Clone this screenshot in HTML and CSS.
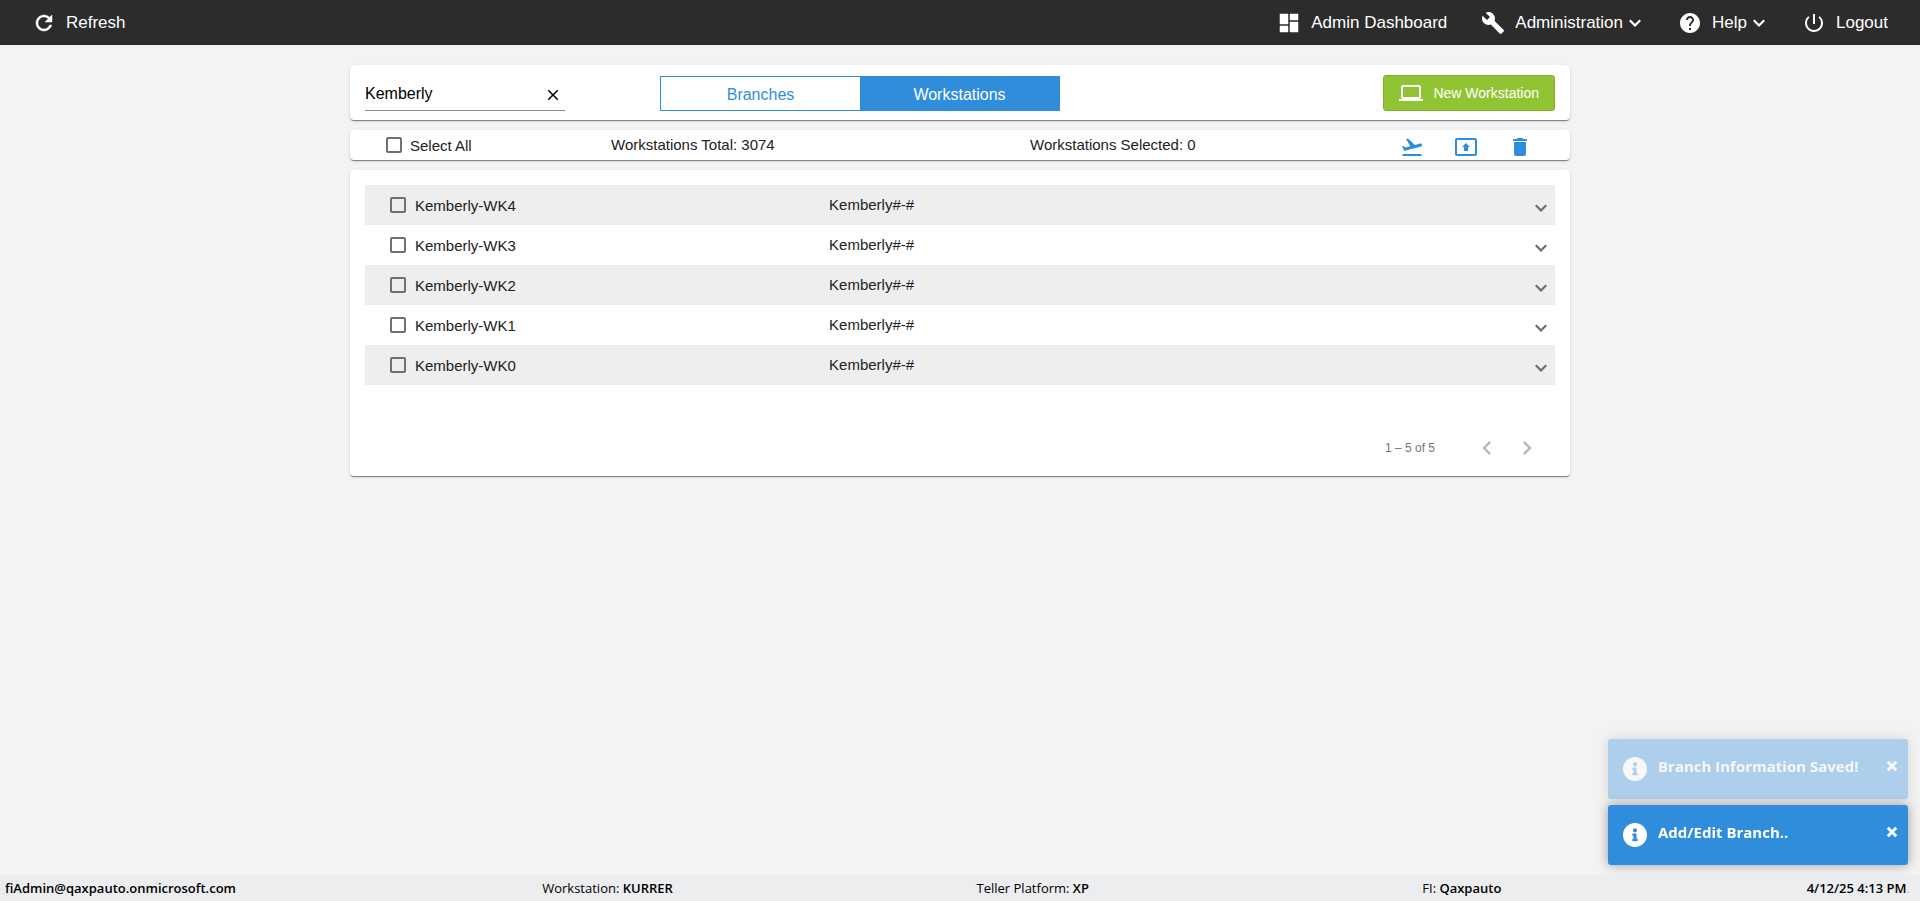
FILE: index.html
```
<!DOCTYPE html>
<html lang="en">
<head>
  <meta charset="UTF-8">
  <meta name="viewport" content="width=device-width, initial-scale=1.0">
  <title>Admin - Workstations</title>
  <link rel="stylesheet" href="styles.css">
</head>
<body>
  <!-- shared icons -->
  <svg class="sprite" aria-hidden="true">
    <symbol id="chevron" viewBox="3 3 18 18"><path d="M6.8 9.3l5.2 5.2 5.2-5.2" fill="none" stroke="currentColor" stroke-width="2.2"/></symbol>
    <symbol id="info" viewBox="8 8 496 496"><path d="M256 8C119.043 8 8 119.083 8 256c0 136.997 111.043 248 248 248s248-111.003 248-248C504 119.083 392.957 8 256 8zm0 110c23.196 0 42 18.804 42 42s-18.804 42-42 42-42-18.804-42-42 18.804-42 42-42zm56 254c0 6.627-5.373 12-12 12h-88c-6.627 0-12-5.373-12-12v-24c0-6.627 5.373-12 12-12h12v-64h-12c-6.627 0-12-5.373-12-12v-24c0-6.627 5.373-12 12-12h64c6.627 0 12 5.373 12 12v100h12c6.627 0 12 5.373 12 12v24z"/></symbol>
    <symbol id="cross" viewBox="0 0 12 12"><path d="M1.8 1.8l8.4 8.4M10.2 1.8l-8.4 8.4" fill="none" stroke="currentColor" stroke-width="3"/></symbol>
  </svg>

  <header class="topbar">
    <button class="nav-item">
      <svg class="icon" viewBox="0 0 24 24"><path d="M17.65 6.35C16.2 4.9 14.21 4 12 4c-4.42 0-7.99 3.58-7.99 8s3.57 8 7.99 8c3.73 0 6.84-2.55 7.73-6h-2.08c-.82 2.33-3.04 4-5.65 4-3.31 0-6-2.69-6-6s2.69-6 6-6c1.66 0 3.14.69 4.22 1.78L13 11h7V4l-2.35 2.35z" stroke="currentColor" stroke-width=".5"/></svg>
      <span>Refresh</span>
    </button>
    <nav class="nav-right">
      <a class="nav-item" href="#">
        <svg class="icon" viewBox="0 0 24 24"><path d="M3 13h8V3H3v10zm0 8h8v-6H3v6zm10 0h8V11h-8v10zm0-18v6h8V3h-8z" stroke="currentColor" stroke-width=".5"/></svg>
        <span>Admin Dashboard</span>
      </a>
      <button class="nav-item">
        <svg class="icon" viewBox="0 0 24 24"><path d="M22.7 19l-9.1-9.1c.9-2.3.4-5-1.5-6.9-2-2-5-2.4-7.4-1.3L9 6 6 9 1.6 4.7C.4 7.1.9 10.1 2.9 12.1c1.9 1.9 4.6 2.4 6.9 1.5l9.1 9.1c.4.4 1 .4 1.4 0l2.3-2.3c.5-.4.5-1.1.1-1.4z"/></svg>
        <span>Administration</span>
        <svg class="chevron"><use href="#chevron"/></svg>
      </button>
      <button class="nav-item">
        <svg class="icon" viewBox="0 0 24 24"><path d="M12 2C6.48 2 2 6.48 2 12s4.48 10 10 10 10-4.48 10-10S17.52 2 12 2zm1 17h-2v-2h2v2zm2.07-7.75l-.9.92C13.45 12.9 13 13.5 13 15h-2v-.5c0-1.1.45-2.1 1.17-2.83l1.24-1.26c.37-.36.59-.86.59-1.41 0-1.1-.9-2-2-2s-2 .9-2 2H8c0-2.21 1.79-4 4-4s4 1.79 4 4c0 .88-.36 1.68-.93 2.25z"/></svg>
        <span>Help</span>
        <svg class="chevron"><use href="#chevron"/></svg>
      </button>
      <a class="nav-item" href="#">
        <svg class="icon" viewBox="0 0 24 24"><path d="M13 3h-2v10h2V3zm4.83 2.17l-1.42 1.42C17.99 7.86 19 9.81 19 12c0 3.87-3.13 7-7 7s-7-3.13-7-7c0-2.19 1.01-4.14 2.58-5.42L6.17 5.17C4.23 6.82 3 9.26 3 12c0 4.97 4.03 9 9 9s9-4.03 9-9c0-2.74-1.23-5.18-3.17-6.83z"/></svg>
        <span>Logout</span>
      </a>
    </nav>
  </header>

  <main class="content">
    <section class="card toolbar">
      <div class="search">
        <input class="search-input" type="text" value="Kemberly" aria-label="Search workstations">
        <button class="search-clear" aria-label="Clear">
          <svg viewBox="0 0 24 24"><path d="M19 6.41L17.59 5 12 10.59 6.41 5 5 6.41 10.59 12 5 17.59 6.41 19 12 13.41 17.59 19 19 17.59 13.41 12z"/></svg>
        </button>
      </div>
      <div class="tabs">
        <button class="tab">Branches</button>
        <button class="tab active">Workstations</button>
      </div>
      <button class="btn-new">
        <svg class="icon" viewBox="0 0 24 24"><path d="M20 18c1.1 0 1.99-.9 1.99-2L22 6c0-1.1-.9-2-2-2H4c-1.1 0-2 .9-2 2v10c0 1.1.9 2 2 2H0v2h24v-2h-4zM4 6h16v10H4V6z"/></svg>
        <span>New Workstation</span>
      </button>
    </section>

    <section class="card summary">
      <label class="select-all"><input class="check" type="checkbox"> Select All</label>
      <span>Workstations Total: 3074</span>
      <span>Workstations Selected: 0</span>
      <div class="actions">
        <button class="action" aria-label="Deploy">
          <svg class="icon" viewBox="0 0 24 24"><path d="M2.5 19h19v2h-19zm19.57-9.36c-.21-.8-1.04-1.28-1.84-1.06L14.92 10l-6.9-6.43-1.93.51 4.14 7.17-4.97 1.33-1.97-1.54-1.45.39 1.82 3.16.77 1.33 1.6-.43 5.31-1.42 4.35-1.16L21 11.49c.81-.23 1.28-1.05 1.07-1.85z"/></svg>
        </button>
        <button class="action" aria-label="Upload">
          <svg class="icon" viewBox="0 0 24 24"><path d="M21 3H3c-1.11 0-2 .89-2 2v14c0 1.11.89 2 2 2h18c1.11 0 2-.89 2-2V5c0-1.11-.89-2-2-2zm0 16.02H3V4.98h18v14.04zM10 12H8l4-4 4 4h-2v4h-4v-4z"/></svg>
        </button>
        <button class="action" aria-label="Delete">
          <svg class="icon" viewBox="0 0 24 24"><path d="M6 19c0 1.1.9 2 2 2h8c1.1 0 2-.9 2-2V7H6v12zM19 4h-3.5l-1-1h-5l-1 1H5v2h14V4z"/></svg>
        </button>
      </div>
    </section>

    <section class="card list">
      <table class="stations">
        <tbody>
          <tr>
            <td class="col-name"><label><input class="check" type="checkbox"> Kemberly-WK4</label></td>
            <td>Kemberly#-#</td>
            <td class="col-expand"><button aria-label="Expand"><svg class="chevron"><use href="#chevron"/></svg></button></td>
          </tr>
          <tr>
            <td class="col-name"><label><input class="check" type="checkbox"> Kemberly-WK3</label></td>
            <td>Kemberly#-#</td>
            <td class="col-expand"><button aria-label="Expand"><svg class="chevron"><use href="#chevron"/></svg></button></td>
          </tr>
          <tr>
            <td class="col-name"><label><input class="check" type="checkbox"> Kemberly-WK2</label></td>
            <td>Kemberly#-#</td>
            <td class="col-expand"><button aria-label="Expand"><svg class="chevron"><use href="#chevron"/></svg></button></td>
          </tr>
          <tr>
            <td class="col-name"><label><input class="check" type="checkbox"> Kemberly-WK1</label></td>
            <td>Kemberly#-#</td>
            <td class="col-expand"><button aria-label="Expand"><svg class="chevron"><use href="#chevron"/></svg></button></td>
          </tr>
          <tr>
            <td class="col-name"><label><input class="check" type="checkbox"> Kemberly-WK0</label></td>
            <td>Kemberly#-#</td>
            <td class="col-expand"><button aria-label="Expand"><svg class="chevron"><use href="#chevron"/></svg></button></td>
          </tr>
        </tbody>
      </table>
      <div class="paginator">
        <span class="range">1 – 5 of 5</span>
        <button class="page-btn" aria-label="Previous page" disabled>
          <svg viewBox="0 0 24 24"><path d="M15.41 7.41L14 6l-6 6 6 6 1.41-1.41L10.83 12z"/></svg>
        </button>
        <button class="page-btn" aria-label="Next page" disabled>
          <svg viewBox="0 0 24 24"><path d="M10 6L8.59 7.41 13.17 12l-4.58 4.59L10 18l6-6z"/></svg>
        </button>
      </div>
    </section>
  </main>

  <div class="toasts">
    <div class="toast fading">
      <svg class="toast-icon"><use href="#info"/></svg>
      <span class="toast-text">Branch Information Saved!</span>
      <button class="toast-close" aria-label="Close"><svg><use href="#cross"/></svg></button>
    </div>
    <div class="toast">
      <svg class="toast-icon"><use href="#info"/></svg>
      <span class="toast-text">Add/Edit Branch..</span>
      <button class="toast-close" aria-label="Close"><svg><use href="#cross"/></svg></button>
    </div>
  </div>

  <footer class="statusbar">
    <strong>fiAdmin@qaxpauto.onmicrosoft.com</strong>
    <span>Workstation: <strong>KURRER</strong></span>
    <span>Teller Platform: <strong>XP</strong></span>
    <span>FI: <strong>Qaxpauto</strong></span>
    <span><strong>4/12/25 4:13 PM</strong><span class="dot">.</span></span>
  </footer>
</body>
</html>
```
FILE: styles.css
```
* {
  box-sizing: border-box;
}
body {
  margin: 0;
  min-height: 100vh;
  display: flex;
  flex-direction: column;
  background-color: #f3f3f3;
  color: #212121;
  font-family: Arial, "Liberation Sans", sans-serif;
  font-size: 15px;
}
button {
  padding: 0;
  border: none;
  background: none;
  color: inherit;
  font: inherit;
  cursor: pointer;
}
svg {
  display: block;
  fill: currentColor;
}
.sprite {
  display: none;
}
.icon {
  width: 24px;
  height: 24px;
}
.chevron {
  width: 18px;
  height: 18px;
}

/* Top bar */
.topbar {
  display: flex;
  justify-content: space-between;
  align-items: center;
  height: 45px;
  padding: 0 32px;
  background-color: #2c2c2c;
  color: #fff;
  font-size: 17px;
}
.nav-right {
  display: flex;
  gap: 34px;
}
.nav-item {
  display: flex;
  align-items: center;
  color: #fff;
  text-decoration: none;
}
.nav-item .icon {
  margin-right: 10px;
}
.nav-item .chevron {
  margin-left: 3px;
}

/* Main area */
.content {
  flex: 1;
  display: flex;
  flex-direction: column;
  gap: 10px;
  width: 100%;
  max-width: 1220px;
  margin: 20px auto;
}
.card {
  background-color: #fff;
  border-radius: 4px;
  box-shadow: 0 2px 1px -1px rgba(0, 0, 0, 0.3), 0 1px 1px 0 rgba(0, 0, 0, 0.2), 0 1px 3px 0 rgba(0, 0, 0, 0.12);
}
.toolbar {
  display: flex;
  align-items: flex-end;
  padding: 10px 15px 9px;
}
.search {
  display: flex;
  align-items: center;
  width: 200px;
  height: 35px;
  padding-top: 1px;
  border-bottom: 1px solid #8c8c8c;
}
.search-input {
  flex: 1;
  min-width: 0;
  padding: 0;
  border: none;
  outline: none;
  background: none;
  color: #000;
  font: inherit;
  font-size: 16px;
}
.search-clear {
  padding: 2px 3px 0;
  color: #000;
}
.search-clear svg {
  width: 18px;
  height: 18px;
}
.tabs {
  display: flex;
  width: 400px;
  height: 35px;
  margin-left: 95px;
  border: 1px solid #308ddc;
}
.tab {
  flex: 1;
  padding-top: 2px;
  color: #308ddc;
  font-size: 16px;
}
.tab.active {
  background-color: #308ddc;
  color: #fff;
}
.btn-new {
  display: flex;
  align-items: center;
  gap: 10px;
  height: 36px;
  margin-left: auto;
  padding: 0 15px;
  border: 1px solid #80ae2c;
  border-radius: 3px;
  background-color: #91c432;
  color: #fff;
  font-size: 14px;
}

/* Totals row */
.summary {
  display: grid;
  grid-template-columns: 225px 419px 1fr auto;
  align-items: center;
  height: 30px;
  padding: 0 38px 0 36px;
}
.summary > span {
  padding-bottom: 2px;
}
label {
  display: flex;
  align-items: center;
  gap: 8px;
}
.check {
  appearance: none;
  width: 16px;
  height: 16px;
  margin: 0;
  border: 2px solid #707070;
  border-radius: 2px;
}
.check:checked {
  background-color: #308ddc;
  border-color: #308ddc;
}
.actions {
  display: flex;
  gap: 30px;
  padding-top: 4px;
  color: #308ddc;
}

/* Workstation list */
.list {
  padding: 15px 15px 8px;
}
.stations {
  width: 100%;
  table-layout: fixed;
  border-collapse: collapse;
}
.stations tr {
  height: 40px;
}
.stations tr:nth-child(odd) {
  background-color: #eee;
}
.stations td {
  padding: 0 0 2px;
}
.stations .col-name {
  width: 39%;
  padding: 0 0 0 25px;
}
.col-name label {
  gap: 9px;
}
.stations .col-expand {
  width: 40px;
  padding: 5px 5px 0 0;
}
.col-expand button {
  display: block;
  margin-left: auto;
  color: #6b6b6b;
}
.paginator {
  display: flex;
  justify-content: flex-end;
  align-items: center;
  margin-top: 43px;
  padding-right: 8px;
  color: #757575;
  font-size: 12px;
}
.range {
  margin-right: 32px;
}
.page-btn {
  padding: 6px;
  color: #b8b8b8;
}
.page-btn svg {
  width: 28px;
  height: 28px;
}

/* Toast messages */
.toasts {
  position: fixed;
  right: 12px;
  bottom: 36px;
  display: flex;
  flex-direction: column;
  gap: 6px;
  width: 300px;
  font-family: "Segoe UI", "Open Sans", sans-serif;
}
.toast {
  display: flex;
  height: 60px;
  padding: 15px 10px 15px 15px;
  border-radius: 3px;
  background-color: #308ddc;
  box-shadow: 0 0 12px #999;
  color: #fff;
}
.toast.fading {
  opacity: 0.35;
}
.toast-icon {
  width: 24px;
  height: 24px;
  margin: 3px 11px 0 0;
}
.toast-text {
  flex: 1;
  font-size: 15px;
  font-weight: 700;
  line-height: 24px;
}
.toast-close {
  align-self: flex-start;
  margin-top: 6px;
}
.toast-close svg {
  width: 12px;
  height: 12px;
}

/* Status bar */
.statusbar {
  display: grid;
  grid-template-columns: 28.2% 22.8% 23.4% 1fr auto;
  align-items: center;
  height: 26px;
  padding: 0 10px 0 5px;
  background-color: #ecedef;
  color: #000;
  font-family: "Segoe UI", "Open Sans", sans-serif;
  font-size: 13px;
}
.statusbar strong {
  font-weight: 600;
}
.dot {
  color: #bbb;
}
```
